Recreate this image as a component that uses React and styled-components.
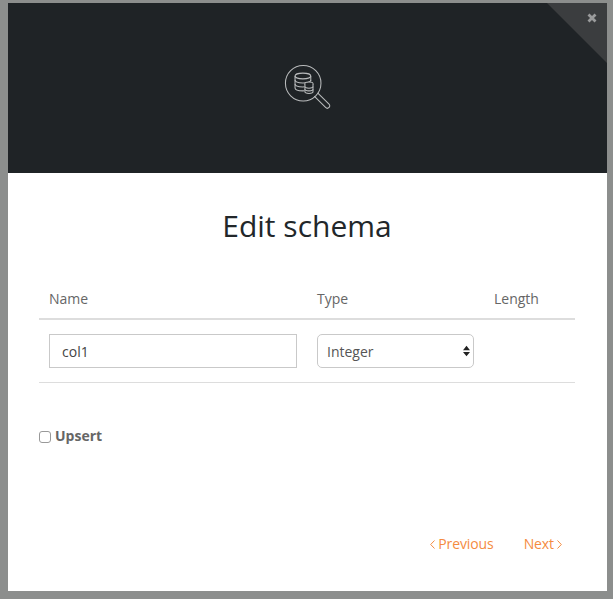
import React from 'react'
import styled, {createGlobalStyle} from 'styled-components'

const GlobalStyle = createGlobalStyle`
  html, body {
    margin: 0;
    padding: 0;
    background: #8c8e8d;
    font-family: "Open Sans", "Liberation Sans", sans-serif;
  }
`

const Page = styled.div`
  height: 599px;
  padding: 3px 6px 8px 8px;
  box-sizing: border-box;
`

const Modal = styled.div`
  position: relative;
  width: 599px;
  height: 588px;
  background: white;
  display: flex;
  flex-direction: column;
  overflow: hidden;
`

const Banner = styled.header`
  height: 170px;
  background: #1f2326;
  display: flex;
  align-items: flex-start;
  justify-content: center;
  padding-top: 61px;
  padding-left: 1px;
  box-sizing: border-box;
  flex-shrink: 0;
`

const CloseCorner = styled.button`
  position: absolute;
  top: 0;
  right: 0;
  width: 60px;
  height: 60px;
  padding: 0;
  border: none;
  background: linear-gradient(to top right, transparent 49.6%, #3b3d3f 50.4%);
`

const CloseMark = styled.svg`
  position: absolute;
  top: 10px;
  right: 10px;
  width: 10px;
  height: 10px;
`

const Body = styled.main`
  flex: 1;
  display: flex;
  flex-direction: column;
  padding: 35px 32px 0 31px;
`

const Title = styled.h1`
  margin: 0 0 38px;
  font-size: 30px;
  line-height: 36px;
  font-weight: 400;
  color: #22272a;
  text-align: center;
`

const HeadRow = styled.div`
  display: grid;
  grid-template-columns: 268px 177px 1fr;
  height: 34px;
  padding: 0 0 2px 10px;
  border-bottom: 2px solid #dddddd;
  align-items: center;
`

const HeadCell = styled.div`
  font-size: 14px;
  line-height: 20px;
  color: #666666;
`

const FieldRow = styled.div`
  display: grid;
  grid-template-columns: 268px 177px 1fr;
  padding: 14px 0 14px 10px;
  border-bottom: 1px solid #dddddd;
`

const TextInput = styled.input`
  width: 248px;
  height: 34px;
  box-sizing: border-box;
  padding: 0 12px;
  border: 1px solid #c9c9c9;
  border-radius: 0;
  outline: none;
  font: inherit;
  font-size: 14px;
  color: #444444;
`

const SelectWrap = styled.div`
  position: relative;
  width: 157px;
  height: 34px;
`

const TypeSelect = styled.select`
  appearance: none;
  width: 100%;
  height: 100%;
  box-sizing: border-box;
  padding: 0 9px;
  border: 1px solid #c9c9c9;
  border-radius: 5px;
  background: white;
  outline: none;
  font: inherit;
  font-size: 14px;
  color: #555555;
`

const SelectArrows = styled.svg`
  position: absolute;
  top: 11px;
  right: 4px;
  width: 7px;
  height: 12px;
  pointer-events: none;
`

const CheckLabel = styled.label`
  display: flex;
  align-items: center;
  gap: 4px;
  margin: 43px 0 0;
  font-size: 14px;
  line-height: 20px;
  font-weight: 700;
  color: #666666;
`

const CheckBox = styled.input`
  appearance: none;
  width: 12px;
  height: 12px;
  margin: 1px 0 0;
  border: 1px solid #999999;
  border-radius: 3px;
  background: white;
`

const Footer = styled.footer`
  margin-top: auto;
  display: flex;
  justify-content: flex-end;
  gap: 30px;
  padding: 0 13px 37px 0;
`

const NavLink = styled.a`
  display: flex;
  align-items: center;
  gap: 3px;
  font-size: 14px;
  line-height: 20px;
  letter-spacing: -0.1px;
  color: #f58b3f;
  cursor: pointer;
`

const Chevron = styled.svg`
  width: 5px;
  height: 9px;
  margin-top: 1px;
`

function SchemaIcon () {
  return (
    <svg width="48" height="48" viewBox="0 0 50 50" fill="none" stroke="#b9bbbc" strokeWidth="1.1">
      <circle cx="20" cy="20" r="18.5" />
      <path d="M31.5 33.5 L 43.3 45.3 a 2.4 2.4 0 0 0 3.6 -3.6 L 35 30" />
      <ellipse cx="19.7" cy="12.5" rx="8.2" ry="3" />
      <path d="M11.5 12.5 V25 c0 1.7 3.4 3 8.2 3 c0.4 0 1 0 1.6 -0.1" />
      <path d="M11.5 16.7 c0 1.7 3.4 3 8.2 3 s8.2 -1.3 8.2 -3" />
      <path d="M11.5 20.9 c0 1.7 3.4 3 8.2 3 c0.4 0 1 0 1.6 -0.1" />
      <path d="M27.9 12.5 V18" />
      <ellipse cx="26" cy="20.5" rx="4.2" ry="1.7" fill="#1f2326" />
      <path d="M21.8 20.5 V29 c0 1 1.9 1.7 4.2 1.7 s4.2 -0.7 4.2 -1.7 V20.5" fill="#1f2326" />
      <path d="M21.8 23.5 c0 1 1.9 1.7 4.2 1.7 s4.2 -0.7 4.2 -1.7" />
      <path d="M21.8 26.3 c0 1 1.9 1.7 4.2 1.7 s4.2 -0.7 4.2 -1.7" />
    </svg>
  )
}

export default function App () {
  return (
    <Page>
      <GlobalStyle />
      <Modal>
        <Banner>
          <SchemaIcon />
        </Banner>
        <CloseCorner aria-label="Close">
          <CloseMark viewBox="0 0 10 10">
            <path d="M1.5 1.5 L8.5 8.5 M8.5 1.5 L1.5 8.5" stroke="#9a9b9c" strokeWidth="2.8" />
          </CloseMark>
        </CloseCorner>
        <Body>
          <Title>Edit schema</Title>
          <HeadRow>
            <HeadCell>Name</HeadCell>
            <HeadCell>Type</HeadCell>
            <HeadCell>Length</HeadCell>
          </HeadRow>
          <FieldRow>
            <TextInput defaultValue="col1" />
            <SelectWrap>
              <TypeSelect defaultValue="Integer">
                <option>Integer</option>
                <option>String</option>
                <option>Boolean</option>
              </TypeSelect>
              <SelectArrows viewBox="0 0 8 12">
                <path d="M4 0 L8 5 H0 Z M4 12 L0 7 H8 Z" fill="#222222" />
              </SelectArrows>
            </SelectWrap>
            <div />
          </FieldRow>
          <CheckLabel>
            <CheckBox type="checkbox" />
            Upsert
          </CheckLabel>
          <Footer>
            <NavLink>
              <Chevron viewBox="0 0 5 9">
                <path d="M4.5 0.5 L0.7 4.5 L4.5 8.5" fill="none" stroke="#f58b3f" />
              </Chevron>
              Previous
            </NavLink>
            <NavLink>
              Next
              <Chevron viewBox="0 0 5 9">
                <path d="M0.5 0.5 L4.3 4.5 L0.5 8.5" fill="none" stroke="#f58b3f" />
              </Chevron>
            </NavLink>
          </Footer>
        </Body>
      </Modal>
    </Page>
  )
}
